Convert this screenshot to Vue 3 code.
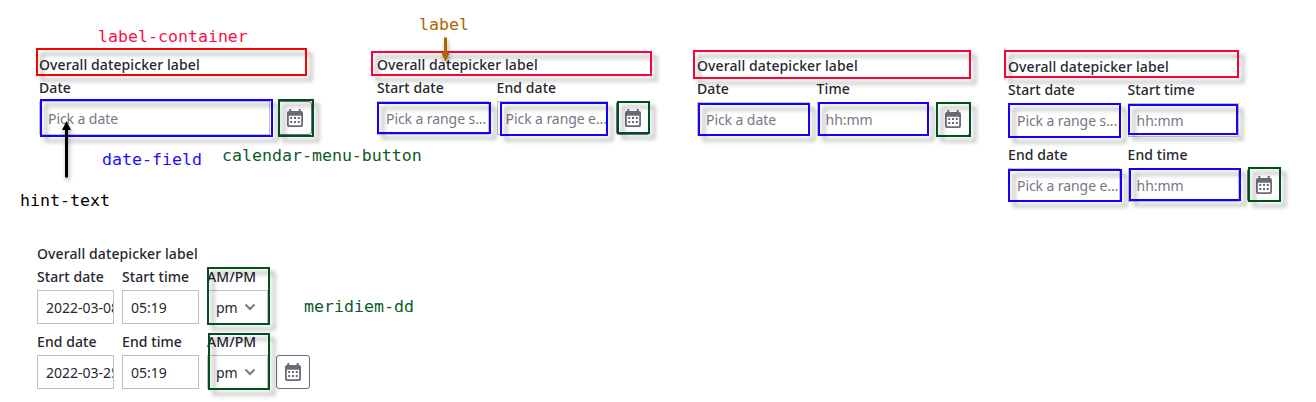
<script setup>
const pickers = [
  {
    id: 'single',
    rows: [[{ label: 'Date', hint: 'Pick a date', width: 231 }]],
  },
  {
    id: 'range',
    rows: [[
      { label: 'Start date', hint: 'Pick a range s...', width: 111.6 },
      { label: 'End date', hint: 'Pick a range e...', width: 111.6 },
    ]],
  },
  {
    id: 'date-time',
    rows: [[
      { label: 'Date', hint: 'Pick a date', width: 111.6 },
      { label: 'Time', hint: 'hh:mm', width: 111.6 },
    ]],
  },
  {
    id: 'range-time',
    rows: [
      [
        { label: 'Start date', hint: 'Pick a range s...', width: 111.6 },
        { label: 'Start time', hint: 'hh:mm', width: 111.6 },
      ],
      [
        { label: 'End date', hint: 'Pick a range e...', width: 111.6 },
        { label: 'End time', hint: 'hh:mm', width: 111.6 },
      ],
    ],
  },
  {
    id: 'meridiem',
    rows: [
      [
        { label: 'Start date', value: '2022-03-08', width: 77 },
        { label: 'Start time', value: '05:19', width: 77 },
        { label: 'AM/PM', value: 'pm', width: 61, select: true },
      ],
      [
        { label: 'End date', value: '2022-03-25', width: 77 },
        { label: 'End time', value: '05:19', width: 77 },
        { label: 'AM/PM', value: 'pm', width: 61, select: true },
      ],
    ],
  },
]

// Callout outlines: colour, left, top, right, bottom
const outlines = [
  ['#ff0000', 36, 48, 307, 76],
  ['#1400ff', 40, 99, 273, 137],
  ['#00501e', 278, 99, 314, 137],
  ['#ff0032', 371, 51, 652, 76],
  ['#1400ff', 377, 102, 491, 134],
  ['#1400ff', 500, 102, 608, 136],
  ['#00501e', 617, 101, 650, 134],
  ['#ff0032', 693, 50, 971, 79],
  ['#1400ff', 698, 103, 810, 136],
  ['#1400ff', 818, 102, 929, 136],
  ['#00501e', 936, 102, 971, 137],
  ['#ff0032', 1004, 50, 1239, 78],
  ['#1400ff', 1008, 103, 1121, 138],
  ['#1400ff', 1128, 104, 1238, 135],
  ['#1400ff', 1008, 169, 1122, 202],
  ['#1400ff', 1129, 168, 1241, 201],
  ['#00501e', 1248, 167, 1281, 202],
  ['#00501e', 207, 267, 270, 325],
  ['#00501e', 208, 333, 270, 390],
].map(([color, l, t, r, b]) => ({
  left: l + 'px',
  top: t + 'px',
  width: r - l + 'px',
  height: b - t + 'px',
  borderColor: color,
}))

const notes = [
  { text: 'label-container', color: '#ff0f46', x: 98, y: 27 },
  { text: 'label', color: '#ad6500', x: 419, y: 15 },
  { text: 'date-field', color: '#1c0cff', x: 102, y: 150 },
  { text: 'calendar-menu-button', color: '#0d5a28', x: 222, y: 146 },
  { text: 'hint-text', color: '#000000', x: 20, y: 191 },
  { text: 'meridiem-dd', color: '#0d5a28', x: 304, y: 297 },
]
</script>

<template>
  <main class="sheet">
    <section v-for="p in pickers" :key="p.id" class="picker" :class="p.id">
      <div class="title">Overall datepicker label</div>
      <div v-for="(row, i) in p.rows" :key="i" class="row">
        <div v-for="f in row" :key="f.label" class="group">
          <label class="label">{{ f.label }}</label>
          <div class="field" :style="{ width: f.width + 'px' }">
            <span class="text" :class="{ hint: f.hint }">{{ f.hint || f.value }}</span>
            <svg v-if="f.select" class="chevron" width="12" height="8" viewBox="0 0 12 8">
              <path d="M1.5 1.5 L6 6 L10.5 1.5" fill="none" stroke="#787885" stroke-width="2" />
            </svg>
          </div>
        </div>
        <button v-if="i === p.rows.length - 1" class="calendar">
          <svg width="16" height="18" viewBox="0 0 16 18">
            <path fill="#6b6b78" fill-rule="evenodd" d="M2.3 0H4.3V2H11.7V0H13.7V2H14Q16 2 16 4V16Q16 18 14 18H2Q0 18 0 16V4Q0 2 2 2H2.3ZM1.8 6.7V15.2Q1.8 16.2 2.8 16.2H13.2Q14.2 16.2 14.2 15.2V6.7Z" />
            <path fill="#6b6b78" d="M3.2 8h2v2h-2zM7 8h2v2H7zM10.8 8h2v2h-2zM3.2 12h2v2h-2zM7 12h2v2H7zM10.8 12h2v2h-2z" />
          </svg>
        </button>
      </div>
    </section>

    <div v-for="(style, i) in outlines" :key="'o' + i" class="outline" :style="style"></div>
    <span
      v-for="n in notes"
      :key="n.text"
      class="note"
      :style="{ left: n.x + 'px', top: n.y + 'px', color: n.color }"
    >{{ n.text }}</span>
    <svg class="arrows" width="1316" height="402" viewBox="0 0 1316 402">
      <path d="M65 177V130H62L66.5 121L71 130H68V177Q66.5 178.5 65 177Z" fill="#000" />
      <path d="M444 37.500H447V52H450L445.500 61.500L441 52H444Z" fill="#ad6500" />
    </svg>
  </main>
</template>

<style>
body {
  margin: 0;
  background: #fff;
}
</style>

<style scoped>
.sheet {
  position: relative;
  box-sizing: border-box;
  width: 1316px;
  height: 402px;
  padding: 54px 0 0 39px;
  overflow: hidden;
  display: grid;
  grid-template-columns: 338px 320px 311px 308px;
  grid-template-rows: 189px 150px;
  align-items: start;
  background: #fff;
  font-family: "Noto Sans", "Open Sans", sans-serif;
  font-size: 14px;
  color: #272730;
}
.date-time {
  margin-top: 1px;
}
.range-time {
  margin-top: 2px;
}
.meridiem {
  margin-left: -2px;
}
.title {
  height: 23px;
  line-height: 22px;
  font-weight: 500;
  letter-spacing: 0.1px;
  white-space: nowrap;
}
.row {
  display: flex;
  align-items: flex-end;
  gap: 8px;
}
.row + .row {
  margin-top: 7px;
}
.label {
  display: block;
  height: 24px;
  line-height: 22px;
  font-weight: 500;
  letter-spacing: 0.08px;
  white-space: nowrap;
}
.field {
  box-sizing: border-box;
  height: 34px;
  border: 1px solid #c0c0ca;
  padding: 2px 0 0 8px;
  display: flex;
  align-items: center;
  overflow: hidden;
  background: #fff;
}
.text {
  line-height: 20px;
  white-space: nowrap;
}
.hint {
  color: #787885;
  letter-spacing: -0.08px;
}
.chevron {
  flex: none;
  margin: -2px 0 0 6px;
}
.calendar {
  box-sizing: border-box;
  width: 34px;
  height: 34px;
  padding: 0 0 1px;
  border: 1px solid #6e6e7b;
  border-radius: 3px;
  background: #fff;
  display: flex;
  align-items: center;
  justify-content: center;
}
.outline {
  position: absolute;
  box-sizing: border-box;
  border: 2px solid;
  filter: drop-shadow(5px 5px 2px rgba(0, 0, 0, 0.36));
}
.note {
  position: absolute;
  font-family: "DejaVu Sans Mono", monospace;
  font-size: 16.6px;
  line-height: 20px;
  white-space: nowrap;
}
.arrows {
  position: absolute;
  left: 0;
  top: 0;
  filter: drop-shadow(1px 3px 2px rgba(0, 0, 0, 0.35));
}
</style>
